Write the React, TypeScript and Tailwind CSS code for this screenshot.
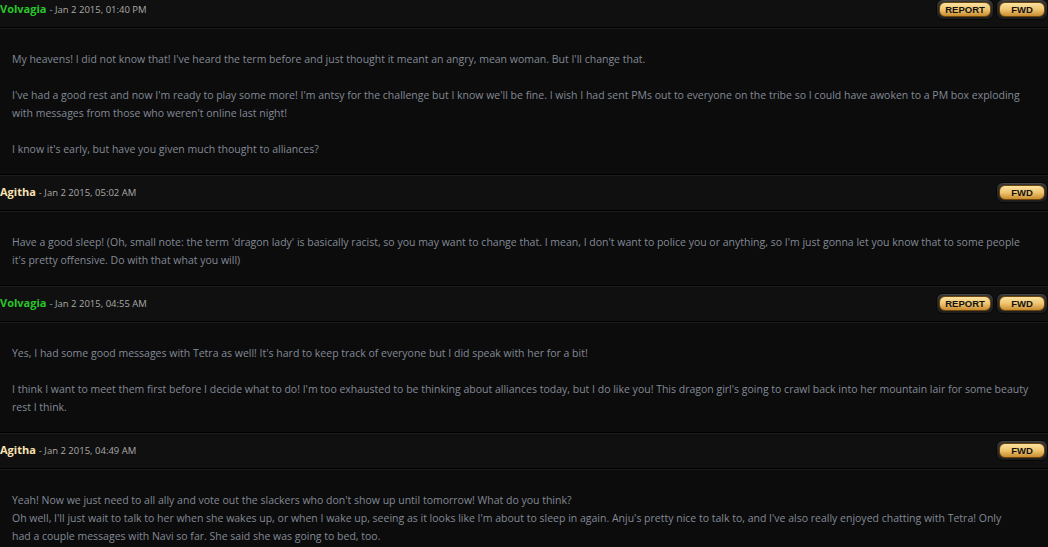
type Post = {
  name: string;
  color: string;
  date: string;
  report: boolean;
  lines: string[];
};

const posts: Post[] = [
  {
    name: "Volvagia",
    color: "text-[#29c629]",
    date: "Jan 2 2015, 01:40 PM",
    report: true,
    lines: [
      "My heavens! I did not know that! I've heard the term before and just thought it meant an angry, mean woman. But I'll change that.",
      "",
      "I've had a good rest and now I'm ready to play some more! I'm antsy for the challenge but I know we'll be fine. I wish I had sent PMs out to everyone on the tribe so I could have awoken to a PM box exploding",
      "with messages from those who weren't online last night!",
      "",
      "I know it's early, but have you given much thought to alliances?",
    ],
  },
  {
    name: "Agitha",
    color: "text-[#f8e2b0]",
    date: "Jan 2 2015, 05:02 AM",
    report: false,
    lines: [
      "Have a good sleep! (Oh, small note: the term 'dragon lady' is basically racist, so you may want to change that. I mean, I don't want to police you or anything, so I'm just gonna let you know that to some people",
      "it's pretty offensive. Do with that what you will)",
    ],
  },
  {
    name: "Volvagia",
    color: "text-[#29c629]",
    date: "Jan 2 2015, 04:55 AM",
    report: true,
    lines: [
      "Yes, I had some good messages with Tetra as well! It's hard to keep track of everyone but I did speak with her for a bit!",
      "",
      "I think I want to meet them first before I decide what to do! I'm too exhausted to be thinking about alliances today, but I do like you! This dragon girl's going to crawl back into her mountain lair for some beauty",
      "rest I think.",
    ],
  },
  {
    name: "Agitha",
    color: "text-[#f8e2b0]",
    date: "Jan 2 2015, 04:49 AM",
    report: false,
    lines: [
      "Yeah! Now we just need to all ally and vote out the slackers who don't show up until tomorrow! What do you think?",
      "Oh well, I'll just wait to talk to her when she wakes up, or when I wake up, seeing as it looks like I'm about to sleep in again. Anju's pretty nice to talk to, and I've also really enjoyed chatting with Tetra! Only",
      "had a couple messages with Navi so far. She said she was going to bed, too.",
    ],
  },
];

function GoldButton({ label, wide }: { label: string; wide?: boolean }) {
  return (
    <div
      className={`flex h-[21px] items-center justify-center rounded-[7px] border border-[#080808] bg-gradient-to-b from-[#353535] to-[#1c1c1c] shadow-[inset_0_1px_0_#444] ${
        wide ? "w-[58px]" : "w-[52px]"
      }`}
    >
      <div
        className={`flex h-[15px] items-center justify-center rounded-[6px] border border-[#6e460c] bg-gradient-to-b from-[#fbe3a0] via-[#efc46e] to-[#c88c2e] text-[9.5px] font-bold leading-none text-[#111]  ${
          wide ? "w-[52px]" : "w-[46px]"
        }`}
        style={{ fontFamily: "'Liberation Sans', Arial, sans-serif" }}
      >
        {label}
      </div>
    </div>
  );
}

function PostBlock({ post }: { post: Post }) {
  return (
    <div>
      <div className="flex h-[37px] items-center justify-between border-y border-black bg-[#101010] shadow-[inset_0_1px_0_#1c1c1c]">
        <div className="flex items-baseline whitespace-nowrap">
          <span className={`text-[11px] font-bold ${post.color}`}>{post.name}</span>
          <span className="ml-[3px] text-[9.5px] text-[#a9a9a9]">- {post.date}</span>
        </div>
        <div className="flex items-center gap-[2px]">
          {post.report && <GoldButton label="REPORT" wide />}
          <GoldButton label="FWD" />
        </div>
      </div>
      <div className="border-t border-[#1c1c1c] bg-[#0c0c0c] pb-[16px] pl-[12px] pr-[4px] pt-[21px] text-[10.5px] leading-[18px] text-[#838a96]">
        {post.lines.map((l, i) => (
          <div key={i} className="h-[18px] whitespace-nowrap">
            {l}
          </div>
        ))}
      </div>
    </div>
  );
}

export default function App() {
  return (
    <div
      className="h-[547px] w-[1048px] overflow-hidden bg-[#0c0c0c]"
      style={{ fontFamily: "'Open Sans', 'Noto Sans', sans-serif" }}
    >
      <div className="-mt-[9px]">
        {posts.map((p, i) => (
          <PostBlock key={i} post={p} />
        ))}
      </div>
    </div>
  );
}
